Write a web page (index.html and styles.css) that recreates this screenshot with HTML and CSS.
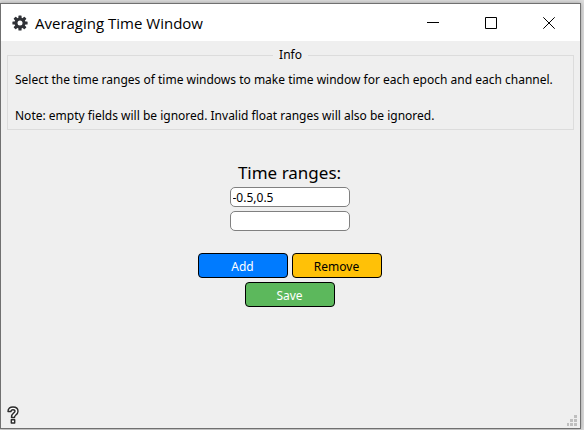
FILE: index.html
```html
<!DOCTYPE html>
<html lang="en">
<head>
<meta charset="utf-8">
<title>Averaging Time Window</title>
<link rel="stylesheet" href="styles.css">
</head>
<body>
<div class="window">
  <header class="titlebar">
    <svg class="app-icon" viewBox="0 0 16 16" aria-hidden="true">
      <g fill="#2f3136">
        <rect x="6.4" y="0.4" width="3.2" height="15.2" rx="0.6"/>
        <rect x="6.4" y="0.4" width="3.2" height="15.2" rx="0.6" transform="rotate(45 8 8)"/>
        <rect x="6.4" y="0.4" width="3.2" height="15.2" rx="0.6" transform="rotate(90 8 8)"/>
        <rect x="6.4" y="0.4" width="3.2" height="15.2" rx="0.6" transform="rotate(135 8 8)"/>
        <circle cx="8" cy="8" r="5.5"/>
      </g>
      <circle cx="8" cy="8" r="2.5" fill="#fff"/>
    </svg>
    <h1 class="title">Averaging Time Window</h1>
    <div class="controls">
      <button class="control" type="button" aria-label="Minimize"><svg class="glyph" viewBox="0 0 12 12"><path d="M0 5.5h12"/></svg></button>
      <button class="control" type="button" aria-label="Maximize"><svg class="glyph" viewBox="0 0 12 12"><path d="M.5.5h11v11H.5z"/></svg></button>
      <button class="control" type="button" aria-label="Close"><svg class="glyph" viewBox="0 0 12 12"><path d="M.3.3l11.4 11.4M11.7.3L.3 11.7"/></svg></button>
    </div>
  </header>
  <main class="content">
    <fieldset class="info">
      <legend class="info-title">Info</legend>
      <p class="info-text">Select the time ranges of time windows to make time window for each epoch and each channel.</p>
      <p class="info-text">Note: empty fields will be ignored. Invalid float ranges will also be ignored.</p>
    </fieldset>
    <form class="form">
      <h2 class="form-title" id="ranges">Time ranges:</h2>
      <div class="fields">
        <input class="field" type="text" value="-0.5,0.5" aria-labelledby="ranges">
        <input class="field" type="text" aria-labelledby="ranges">
      </div>
      <div class="actions">
        <button class="button add" type="button">Add</button>
        <button class="button remove" type="button">Remove</button>
        <button class="button save" type="button">Save</button>
      </div>
    </form>
  </main>
  <footer class="statusbar">
    <button class="help" type="button" aria-label="Help">
      <svg class="help-icon" viewBox="0 0 12 18">
        <path d="M1 5.5C1 2.5 3 1 6 1s5 1.700 5 4.300c0 2-1 3-2.300 3.900C7.800 9.900 7.500 10.300 7.500 11.500h-3c0-2.300.5-3.300 2-4.400C7.600 6.300 8 6 8 5.200 8 4.300 7.300 3.700 6 3.700S4 4.300 4 5.500zM4.300 13.700h3.400v3.300H4.300z" fill="#fff" stroke="#2b2b2b" stroke-width="1.400" stroke-linejoin="round"/>
      </svg>
    </button>
    <svg class="grip" viewBox="0 0 10 11" fill="#bfbfbf" aria-hidden="true" shape-rendering="crispEdges">
      <path d="M7 0h3v3H7zM3 4h3v3H3zM7 4h3v3H7zM0 8h2v3H0zM3 8h3v3H3zM7 8h3v3H7z"/>
    </svg>
  </footer>
</div>
</body>
</html>
```
FILE: styles.css
```css
* {
  box-sizing: border-box;
}

body {
  margin: 0;
  padding: 3px 3px 1px 0;
  min-height: 100vh;
  display: flex;
  background: #dcdcdc;
  color: #000;
  font: 12px/18px "Noto Sans", Tahoma, sans-serif;
}

.window {
  flex: 1;
  display: flex;
  flex-direction: column;
  background: #efefef;
  border: 1px solid #707070;
  box-shadow: 0 0 4px rgba(0, 0, 0, 0.3);
}

.titlebar {
  display: flex;
  align-items: center;
  height: 37px;
  padding-left: 11px;
  background: #fff;
}

.app-icon {
  width: 16px;
  height: 16px;
}

.title {
  flex: 1;
  margin: 0 0 0 7px;
  font: 15px/20px "Open Sans", "Segoe UI", sans-serif;
}

.controls {
  display: flex;
  padding-right: 2px;
}

.control {
  display: grid;
  place-items: center;
  width: 58px;
  height: 36px;
  padding: 0;
  border: 0;
  background: none;
}

.glyph {
  width: 12px;
  height: 12px;
  fill: none;
  stroke: #000;
}

.content {
  flex: 1;
  padding: 5px 6px 0;
}

.info {
  min-width: 0;
  margin: 0;
  padding: 7px 7px 4px;
  border: 1px solid #dcdcdc;
}

.info-title {
  margin: 0 auto;
  padding: 0 6px;
}

.info-text {
  margin: 0;
}

.info-text + .info-text {
  margin-top: 18px;
}

.form {
  display: flex;
  flex-direction: column;
  align-items: center;
  padding: 32px 2px 0 0;
}

.form-title {
  margin: 0 0 3px;
  font-size: 17px;
  font-weight: normal;
  line-height: 22px;
}

.fields {
  display: grid;
  gap: 4px;
}

.field {
  width: 120px;
  height: 20px;
  padding: 0 2px;
  border: 1px solid #808080;
  border-radius: 5px;
  background: #fff;
  font: inherit;
}

.actions {
  display: flex;
  flex-wrap: wrap;
  justify-content: center;
  gap: 4px;
  width: 184px;
  margin-top: 22px;
}

.button {
  width: 90px;
  height: 25px;
  padding: 2px 0 0;
  border: 1px solid #000;
  border-radius: 4px;
  font: inherit;
}

.add {
  background: #007bff;
  color: #fff;
}

.remove {
  background: #ffc107;
  color: #000;
}

.save {
  background: #5cb85c;
  color: #fff;
}

.statusbar {
  display: flex;
  align-items: flex-end;
  justify-content: space-between;
  padding: 0 3px 2px 6px;
}

.help {
  display: block;
  padding: 0 0 2px;
  border: 0;
  background: none;
}

.help-icon {
  display: block;
  width: 12px;
  height: 18px;
}

.grip {
  width: 10px;
  height: 11px;
}
```
